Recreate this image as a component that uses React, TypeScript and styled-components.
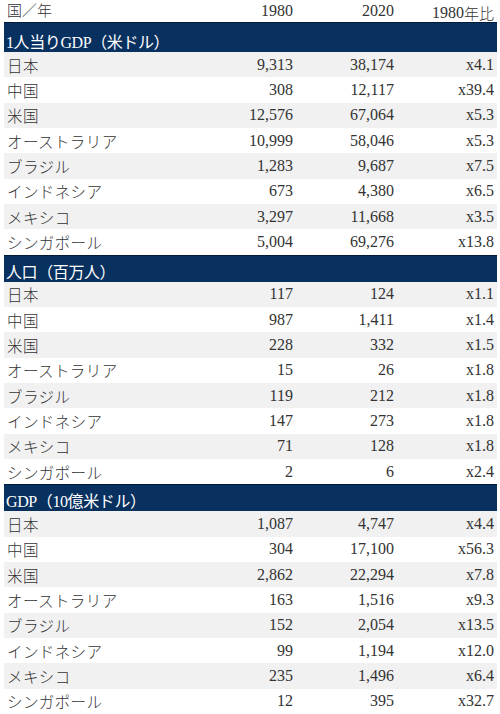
import React from 'react';
import styled, { createGlobalStyle } from 'styled-components';

const GlobalStyle = createGlobalStyle`
  html, body {
    margin: 0;
    padding: 0;
    background: #ffffff;
  }
`;

type Row = [string, string, string, string];
type Section = { title: string; height: number; rows: Row[] };

const countries = ['日本', '中国', '米国', 'オーストラリア', 'ブラジル', 'インドネシア', 'メキシコ', 'シンガポール'];

const zip = (a: string[], b: string[], c: string[]): Row[] =>
  countries.map((name, i) => [name, a[i], b[i], c[i]]);

const sections: Section[] = [
  {
    title: '1人当りGDP（米ドル）',
    height: 30,
    rows: zip(
      ['9,313', '308', '12,576', '10,999', '1,283', '673', '3,297', '5,004'],
      ['38,174', '12,117', '67,064', '58,046', '9,687', '4,380', '11,668', '69,276'],
      ['x4.1', 'x39.4', 'x5.3', 'x5.3', 'x7.5', 'x6.5', 'x3.5', 'x13.8']
    ),
  },
  {
    title: '人口（百万人）',
    height: 27,
    rows: zip(
      ['117', '987', '228', '15', '119', '147', '71', '2'],
      ['124', '1,411', '332', '26', '212', '273', '128', '6'],
      ['x1.1', 'x1.4', 'x1.5', 'x1.8', 'x1.8', 'x1.8', 'x1.8', 'x2.4']
    ),
  },
  {
    title: 'GDP（10億米ドル）',
    height: 27,
    rows: zip(
      ['1,087', '304', '2,862', '163', '152', '99', '235', '12'],
      ['4,747', '17,100', '22,294', '1,516', '2,054', '1,194', '1,496', '395'],
      ['x4.4', 'x56.3', 'x7.8', 'x9.3', 'x13.5', 'x12.0', 'x6.4', 'x32.7']
    ),
  },
];

const Page = styled.div`
  width: 500px;
  height: 714px;
  padding: 0 3px 0 4px;
  box-sizing: border-box;
  overflow: hidden;
  color: #2b2b2b;
`;

const Grid = styled.div`
  display: grid;
  grid-template-columns: 1fr 100px 101px 100px;
`;

const HeadRow = styled(Grid)`
  height: 22px;
  font-family: 'Liberation Serif', serif;
  font-size: 16px;
  color: #333;
`;

const HeadCell = styled.div<{ $right?: boolean; $low?: boolean }>`
  display: flex;
  align-items: ${(p) => (p.$low ? 'flex-end' : 'flex-start')};
  justify-content: ${(p) => (p.$right ? 'flex-end' : 'flex-start')};
  padding: ${(p) => (p.$right ? '1px 3px 0 0' : '0 0 0 3px')};
  line-height: 19px;
`;

const HeadJa = styled.span`
  font-family: 'Noto Sans CJK JP', sans-serif;
  font-weight: 300;
  font-size: 15px;
`;

const Band = styled.div<{ $h: number }>`
  height: ${(p) => p.$h}px;
  box-sizing: border-box;
  background: #08315f;
  border-top: 1px solid #021a38;
  display: flex;
  align-items: flex-end;
  padding: 0 0 0 2px;
  color: #ffffff;
  font-family: 'Liberation Serif', 'Noto Sans CJK JP', serif;
  font-size: 16px;
  line-height: 18px;
  letter-spacing: -0.4px;
`;

const BodyRow = styled(Grid)<{ $alt: boolean }>`
  height: 25.33px;
  align-items: center;
  background: ${(p) => (p.$alt ? '#f1f1f1' : '#ffffff')};
`;

const Label = styled.div`
  padding-left: 3px;
  font-family: 'Noto Sans CJK JP', sans-serif;
  font-weight: 300;
  font-size: 15.5px;
  color: #333;
  letter-spacing: 0.4px;
`;

const Num = styled.div`
  text-align: right;
  padding-right: 3px;
  font-family: 'Liberation Serif', serif;
  font-size: 16px;
  color: #333;
`;

const App = () => (
  <Page>
    <GlobalStyle />
    <HeadRow>
      <HeadCell><HeadJa>国／年</HeadJa></HeadCell>
      <HeadCell $right>1980</HeadCell>
      <HeadCell $right>2020</HeadCell>
      <HeadCell $right $low>1980<HeadJa>年比</HeadJa></HeadCell>
    </HeadRow>
    {sections.map((s) => (
      <React.Fragment key={s.title}>
        <Band $h={s.height}>{s.title}</Band>
        {s.rows.map((r, i) => (
          <BodyRow key={r[0]} $alt={i % 2 === 0}>
            <Label>{r[0]}</Label>
            <Num>{r[1]}</Num>
            <Num>{r[2]}</Num>
            <Num>{r[3]}</Num>
          </BodyRow>
        ))}
      </React.Fragment>
    ))}
  </Page>
);

export default App;
